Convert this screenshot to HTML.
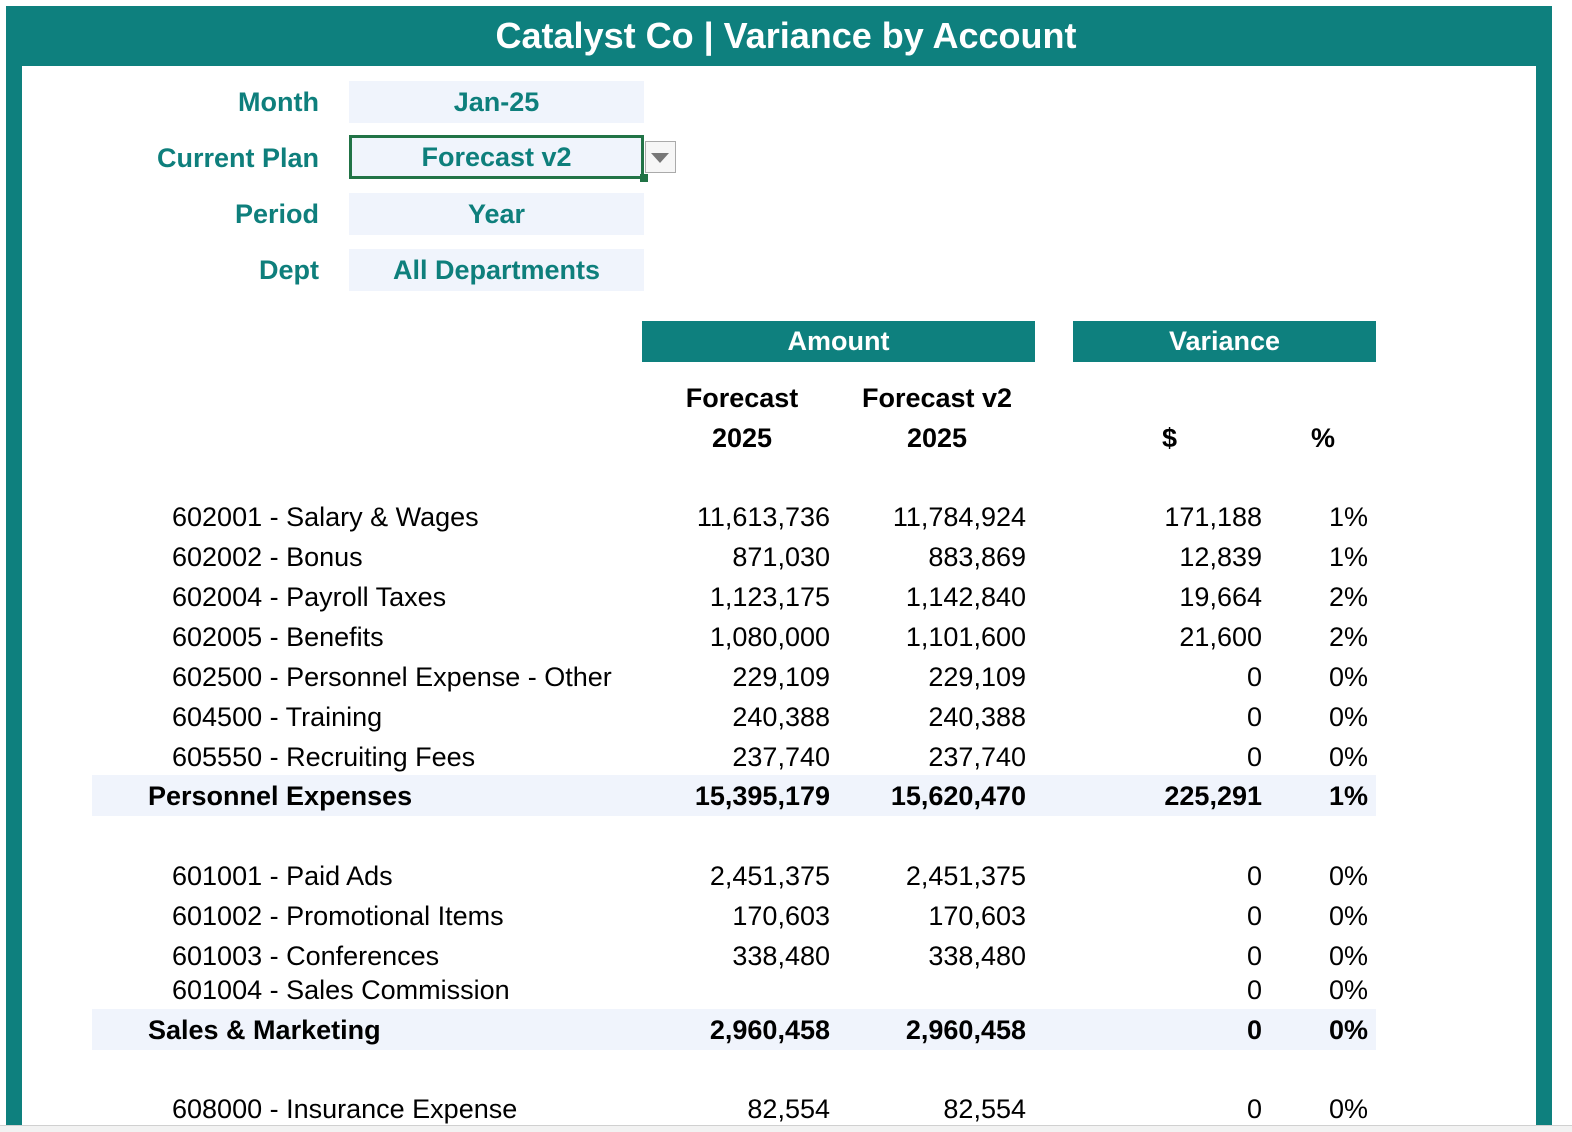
<!DOCTYPE html>
<html><head><style>
*{margin:0;padding:0;box-sizing:border-box}
body{width:1572px;height:1132px;background:#fff;position:relative;overflow:hidden;font-family:"Liberation Sans",sans-serif;color:#000}
.a{position:absolute;white-space:nowrap}
.t{color:#0e7f7c;font-weight:bold;font-size:27px}
.box{position:absolute;background:#f0f4fc;left:349px;width:295px;height:42px;text-align:center;line-height:42px;color:#0e7f7c;font-weight:bold;font-size:27px}
.lab{position:absolute;right:1253px;font-weight:bold;font-size:27px;color:#0e7f7c;line-height:42px}
.r{position:absolute;font-size:27px;line-height:40px;height:40px;white-space:nowrap}
.r span{position:absolute;top:0}
.c1{left:172px}
.n1{right:742px}.n2{right:546px}.n3{right:310px}.n4{right:204px}
.b{font-weight:bold}
.band{position:absolute;left:92px;width:1284px;height:41px;background:#f0f4fc}
</style></head><body>
<div class="a" style="left:6px;top:6px;width:1546px;height:1119px;background:#0e807e"></div>
<div class="a" style="left:22px;top:66px;width:1514px;height:1059px;background:#fff"></div>
<div class="a" style="left:0;top:6px;width:1572px;height:60px;text-align:center;line-height:60px;color:#fff;font-weight:bold;font-size:36px;padding-left:0">Catalyst Co | Variance by Account</div>
<div class="a" style="left:0;top:1125px;width:1572px;height:7px;background:#f2f2f2;border-top:1px solid #d0d0d0"></div>

<div class="lab" style="top:81px">Month</div>
<div class="box" style="top:81px">Jan-25</div>
<div class="lab" style="top:137px">Current Plan</div>
<div class="box" style="top:135px;height:44px;border:3px solid #217346;line-height:38px">Forecast v2</div>
<div class="a" style="left:640px;top:174px;width:8px;height:8px;background:#217346"></div>
<div class="a" style="left:645px;top:141px;width:31px;height:32px;border:1px solid #aaa;background:#f6f6f6"></div>
<div class="a" style="left:651px;top:153px;width:0;height:0;border-left:9px solid transparent;border-right:9px solid transparent;border-top:10px solid #777"></div>
<div class="lab" style="top:193px">Period</div>
<div class="box" style="top:193px">Year</div>
<div class="lab" style="top:249px">Dept</div>
<div class="box" style="top:249px">All Departments</div>

<div class="a" style="left:642px;top:321px;width:393px;height:41px;background:#0e807e;color:#fff;font-weight:bold;font-size:27px;text-align:center;line-height:41px">Amount</div>
<div class="a" style="left:1073px;top:321px;width:303px;height:41px;background:#0e807e;color:#fff;font-weight:bold;font-size:27px;text-align:center;line-height:41px">Variance</div>
<div class="a b" style="left:662px;top:378px;width:160px;text-align:center;font-size:27px;line-height:40px">Forecast<br>2025</div>
<div class="a b" style="left:848px;top:378px;width:178px;text-align:center;font-size:27px;line-height:40px">Forecast v2<br>2025</div>
<div class="a b" style="left:1162px;top:418px;font-size:27px;line-height:40px">$</div>
<div class="a b" style="left:1311px;top:418px;font-size:27px;line-height:40px">%</div>

<div class="band" style="top:775px"></div>
<div class="band" style="top:1009px"></div>

<div class="r" style="top:497px;width:100%"><span class="c1">602001 - Salary &amp; Wages</span><span class="n1">11,613,736</span><span class="n2">11,784,924</span><span class="n3">171,188</span><span class="n4">1%</span></div>
<div class="r" style="top:537px;width:100%"><span class="c1">602002 - Bonus</span><span class="n1">871,030</span><span class="n2">883,869</span><span class="n3">12,839</span><span class="n4">1%</span></div>
<div class="r" style="top:577px;width:100%"><span class="c1">602004 - Payroll Taxes</span><span class="n1">1,123,175</span><span class="n2">1,142,840</span><span class="n3">19,664</span><span class="n4">2%</span></div>
<div class="r" style="top:617px;width:100%"><span class="c1">602005 - Benefits</span><span class="n1">1,080,000</span><span class="n2">1,101,600</span><span class="n3">21,600</span><span class="n4">2%</span></div>
<div class="r" style="top:657px;width:100%"><span class="c1" style="width:471px;overflow:hidden">602500 - Personnel Expense - Other</span><span class="n1">229,109</span><span class="n2">229,109</span><span class="n3">0</span><span class="n4">0%</span></div>
<div class="r" style="top:697px;width:100%"><span class="c1">604500 - Training</span><span class="n1">240,388</span><span class="n2">240,388</span><span class="n3">0</span><span class="n4">0%</span></div>
<div class="r" style="top:737px;width:100%"><span class="c1">605550 - Recruiting Fees</span><span class="n1">237,740</span><span class="n2">237,740</span><span class="n3">0</span><span class="n4">0%</span></div>
<div class="r b" style="top:776px;width:100%"><span style="left:148px">Personnel Expenses</span><span class="n1">15,395,179</span><span class="n2">15,620,470</span><span class="n3">225,291</span><span class="n4">1%</span></div>
<div class="r" style="top:856px;width:100%"><span class="c1">601001 - Paid Ads</span><span class="n1">2,451,375</span><span class="n2">2,451,375</span><span class="n3">0</span><span class="n4">0%</span></div>
<div class="r" style="top:896px;width:100%"><span class="c1">601002 - Promotional Items</span><span class="n1">170,603</span><span class="n2">170,603</span><span class="n3">0</span><span class="n4">0%</span></div>
<div class="r" style="top:936px;width:100%"><span class="c1">601003 - Conferences</span><span class="n1">338,480</span><span class="n2">338,480</span><span class="n3">0</span><span class="n4">0%</span></div>
<div class="r" style="top:970px;width:100%"><span class="c1">601004 - Sales Commission</span><span class="n3">0</span><span class="n4">0%</span></div>
<div class="r b" style="top:1010px;width:100%"><span style="left:148px">Sales &amp; Marketing</span><span class="n1">2,960,458</span><span class="n2">2,960,458</span><span class="n3">0</span><span class="n4">0%</span></div>
<div class="r" style="top:1089px;width:100%"><span class="c1">608000 - Insurance Expense</span><span class="n1">82,554</span><span class="n2">82,554</span><span class="n3">0</span><span class="n4">0%</span></div>
</body></html>
